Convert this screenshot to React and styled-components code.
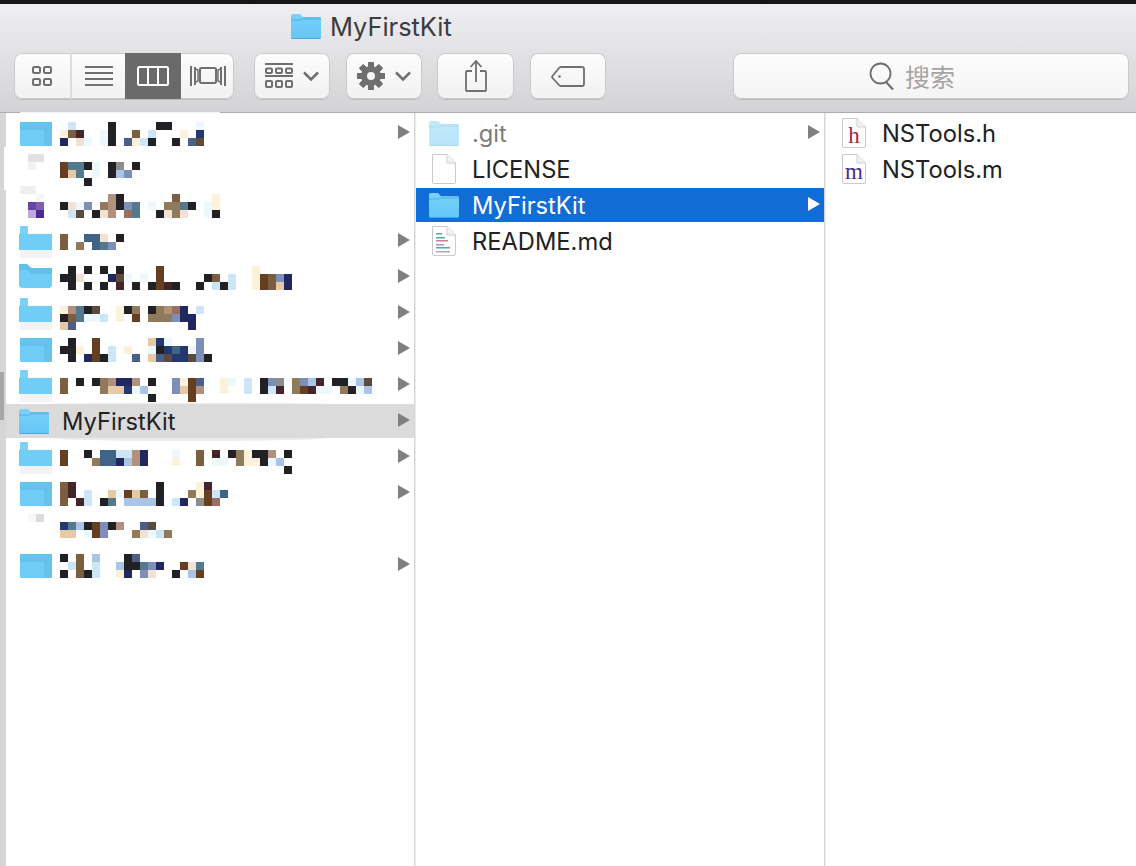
import React from 'react'
import styled, { createGlobalStyle } from 'styled-components';

const PALETTE = {
  k: '#222226', n: '#20285f', N: '#23386e', b: '#7b5d40', r: '#653f22', m: '#45242a',
  s: '#4d5f85', t: '#55798c', d: '#3f6488', l: '#cde6f5', f: '#edf8fd', c: '#fcf1da',
  p: '#e6c9a6', P: '#f2e2d3', o: '#8f7b5c', u: '#7d8fb9', a: '#b2917c', w: '#9a6f5f',
  i: '#a9c4e4', g: '#8a8f8c', h: '#5a4a40', e: '#5d4a38',
};

const LEFT_ROWS = [
  { icon: 'block', top: 6, arrow: true, cells: [
    '.l....k.....kk...f',
    'cbm..fk..b.l...c.N',
    'n.Pf.fk.sclk..k.se',
  ] },
  { icon: 'blank', top: 10, cells: [
    'rttkf.kg.k',
    'rpt.f.kiu',
    '...k',
  ] },
  { icon: 'purple', top: 6, cells: [
    '......ak......b....c',
    'kPfu.oakut.f.ootk.fc',
    '.lh.kPa.wt..kPoP..fk',
  ] },
  { icon: 'tab', top: 10, arrow: true, cells: [
    'b..ddP.k',
    'b.o.dtu',
  ] },
  { icon: 'folder', top: 6, arrow: true, cells: [
    '.k.k.k.k....r...........c',
    'kkP...nef.f.r.....kb.l..crbun',
    '.k.k.k.m.k.krmk..k.lkl..crbpn',
  ] },
  { icon: 'tab', top: 10, arrow: true, cells: [
    'catkh..cko.koawn.l',
    'kbtffl.c.r.ooounn',
    'ps..............n',
  ] },
  { icon: 'block', top: 6, arrow: true, cells: [
    '.k..r......pNf...u',
    'kkc.r.l.c..fkNdNfu',
    '.k.nrkl..s.pshNNhuk',
  ] },
  { icon: 'tab', top: 10, arrow: true, cells: [
    'b.k.koanna.k..ucrs..cf.l.kug.ouim.kkfih',
    'b....oppNfi...upra..c..l.klm.ormff.okfi',
    '...........k....r',
  ] },
  { selected: true, label: 'MyFirstKit', arrow: true },
  { icon: 'tab', top: 10, arrow: true, cells: [
    'r..k.ddllan...f..b.m.kockka.k',
    'r...oddnian...c..b.ff.occkfi',
    '............................k',
  ] },
  { icon: 'block', top: 6, arrow: true, cells: [
    'bm..........k....cm',
    'bm.l..pfrpb.k...ocrld',
    'b.ml.kt.iiiik.ln.grw',
  ] },
  { icon: 'faint', top: 10, cells: [
    'Ntikruka..sh',
    'pp.fru...oPflo',
  ] },
  { icon: 'block', top: 6, arrow: true, cells: [
    'k.b.i...ks',
    '.lb.l..ikktun..rPt',
    'k.bkl..cn.uP..k.ir',
  ] },
];

export default function App() {
  return <Window>
    <GlobalStyle/>
    <BlackBar/>
    <Toolbar>
      <TitleRow>
        <Folder/>
        <Title>MyFirstKit</Title>
      </TitleRow>
      <ToolRow>
        <Segments>
          <Segment $w={58} $divided><GridIcon/></Segment>
          <Segment $w={53}><ListIcon/></Segment>
          <Segment $w={56} $active><ColumnIcon/></Segment>
          <Segment $w={53}><CoverIcon/></Segment>
        </Segments>
        <ToolButton $w={76} $ml={20}><ArrangeIcon/><Chevron/></ToolButton>
        <ToolButton $w={76} $ml={16}><GearIcon/><Chevron/></ToolButton>
        <ToolButton $w={77} $ml={15}><ShareIcon/></ToolButton>
        <ToolButton $w={76} $ml={16}><TagIcon/></ToolButton>
        <SearchBox>
          <SearchIcon/>
          <SearchText>搜索</SearchText>
        </SearchBox>
      </ToolRow>
    </Toolbar>
    <Body>
      <Gutter><GutterPatch/><Thumb/></Gutter>
      <Column $w={408}>
        {LEFT_ROWS.map((row, i) => <LeftRow key={i} row={row}/>)}
      </Column>
      <Divider/>
      <Column $w={408}>
        <Row $pl={13}>
          <Folder faded/>
          <RowText $ml={13} $faded>.git</RowText>
          <Arrow/>
        </Row>
        <Row $pl={15}>
          <Doc/>
          <RowText $ml={15}>LICENSE</RowText>
        </Row>
        <Row $pl={13} $blue>
          <Folder/>
          <RowText $ml={13} $white>MyFirstKit</RowText>
          <Arrow $white/>
        </Row>
        <Row $pl={15}>
          <Doc lines/>
          <RowText $ml={15}>README.md</RowText>
        </Row>
      </Column>
      <Divider/>
      <LastColumn>
        <Row $pl={15}>
          <Doc letter="h" color="#a3243f"/>
          <RowText $ml={15}>NSTools.h</RowText>
        </Row>
        <Row $pl={15}>
          <Doc letter="m" color="#4b2a8c"/>
          <RowText $ml={15}>NSTools.m</RowText>
        </Row>
      </LastColumn>
    </Body>
  </Window>
};

function LeftRow({row}) {
  if (row.selected) {
    return <GreyRow $pl={13}>
      <Folder/>
      <RowText $ml={13}>{row.label}</RowText>
      <Arrow/>
    </GreyRow>;
  }
  return <Row $pl={13}>
    <BlurIcon kind={row.icon}/>
    <Mosaic cells={row.cells} top={row.top}/>
    {row.arrow && <Arrow/>}
  </Row>;
}

// the pixelated file names of the reference
function Mosaic({cells, top}) {
  const rects = [];
  cells.forEach((line, y) => {
    [...line].forEach((ch, x) => {
      if (PALETTE[ch]) rects.push(<rect key={x + '-' + y} x={x * 8} y={y * 8} width="8" height="8" fill={PALETTE[ch]}/>);
    });
  });
  return <MosaicSvg $top={top} width="320" height={cells.length * 8}>{rects}</MosaicSvg>;
}

// the pixelated icons of the left column, drawn on the 36px row
function BlurIcon({kind}) {
  return <BlurSvg width="36" height="34" viewBox="0 0 36 34">
    {kind === 'block' && <>
      <rect x="1" y="6" width="32" height="24" fill="#6fcdf6"/>
      <rect x="1" y="6" width="32" height="8" fill="#63c3ec"/>
      <rect x="25" y="14" width="8" height="16" fill="#68c2e8"/>
    </>}
    {kind === 'tab' && <>
      <rect x="1" y="2" width="8" height="8" fill="#7dd0f6"/>
      <rect x="0" y="10" width="33" height="16" fill="#6fcdf6"/>
      <rect x="1" y="26" width="32" height="8" fill="#f3f3f3"/>
    </>}
    {kind === 'folder' && <>
      <path d="M0 4h8l4 4h21v18l-2 2H2l-2-2z" fill="#6fcdf6"/>
      <path d="M0 4h8l4 4h21v6H12L8 10H0z" fill="#60c1ea"/>
    </>}
    {kind === 'blank' && <>
      <rect x="9" y="2" width="16" height="8" fill="#e2e2e2"/>
      <rect x="9" y="10" width="8" height="8" fill="#f2f2f2"/>
    </>}
    {kind === 'purple' && <>
      <rect x="1" y="-2" width="16" height="8" fill="#efefef"/>
      <rect x="17" y="6" width="8" height="8" fill="#f5f5f5"/>
      <rect x="9" y="14" width="8" height="8" fill="#6a45a8"/>
      <rect x="17" y="14" width="8" height="8" fill="#7f5fb2"/>
      <rect x="9" y="22" width="8" height="8" fill="#bcaad8"/>
      <rect x="17" y="22" width="8" height="8" fill="#4b2a8c"/>
    </>}
    {kind === 'faint' && <>
      <rect x="17" y="2" width="8" height="8" fill="#dcdcdc"/>
      <rect x="9" y="2" width="8" height="8" fill="#f8f8f8"/>
    </>}
  </BlurSvg>;
}

function Folder({faded}) {
  const id = faded ? 'fold-faded' : 'fold';
  return <FolderSvg $faded={faded} width="30" height="25" viewBox="0 0 30 25">
    <defs>
      <linearGradient id={id} x1="0" y1="0" x2="0" y2="1">
        <stop offset="0" stopColor="#78d2fb"/>
        <stop offset="1" stopColor="#64c5f5"/>
      </linearGradient>
    </defs>
    <path d="M0 2A2 2 0 0 1 2 0H9l3 3h16a2 2 0 0 1 2 2v18a2 2 0 0 1-2 2H2a2 2 0 0 1-2-2z" fill={`url(#${id})`}/>
    <path d="M0 5h10l2-2h16a2 2 0 0 1 2 2v1H12l-2 1H0z" fill="#62bfea"/>
    <path d="M0 24h30a2 2 0 0 1-2 1H2a2 2 0 0 1-2-1z" fill="#4aa5d8"/>
  </FolderSvg>;
}

function Doc({lines, letter, color}) {
  return <svg width="26" height="32" viewBox="0 0 26 32">
    <path d="M1.500 1.500H16L24.500 10V29a1.500 1.500 0 0 1-1.500 1.500H3A1.500 1.500 0 0 1 1.500 29z" fill="#fff" stroke="#c9c9c9" strokeWidth="1"/>
    <path d="M16 1.500V10h8.500" fill="#f2f2f2" stroke="#d0d0d0" strokeWidth="1"/>
    {lines && <>
      <rect x="5" y="8" width="6" height="1.500" fill="#54a7a8"/>
      <rect x="5" y="12" width="9" height="1.500" fill="#54a7a8"/>
      <rect x="5" y="15" width="12" height="1.500" fill="#cf7e97"/>
      <rect x="5" y="19" width="8" height="1.500" fill="#a68bdc"/>
      <rect x="5" y="22" width="14" height="1.500" fill="#4fabb0"/>
      <rect x="5" y="26" width="14" height="1.500" fill="#a9a9a9"/>
    </>}
    {letter && <text x="13" y="26" textAnchor="middle" fontFamily="'Liberation Serif', serif" fontSize="23" fill={color}>{letter}</text>}
  </svg>;
}

const ICON_GREY = '#6f6f6f';

function GridIcon() {
  return <svg width="20" height="20" viewBox="0 0 20 20" fill="none" stroke={ICON_GREY} strokeWidth="2">
    <rect x="1" y="1" width="7" height="6" rx="1.500"/>
    <rect x="12" y="1" width="7" height="6" rx="1.500"/>
    <rect x="1" y="13" width="7" height="6" rx="1.500"/>
    <rect x="12" y="13" width="7" height="6" rx="1.500"/>
  </svg>;
}

function ListIcon() {
  return <svg width="28" height="20" viewBox="0 0 28 20" fill={ICON_GREY}>
    <rect y="0" width="28" height="2"/>
    <rect y="6" width="28" height="2"/>
    <rect y="12" width="28" height="2"/>
    <rect y="18" width="28" height="2"/>
  </svg>;
}

function ColumnIcon() {
  return <svg width="32" height="20" viewBox="0 0 32 20" fill="none" stroke="#fff" strokeWidth="2">
    <rect x="1" y="1" width="30" height="18" rx="1.500"/>
    <path d="M11 1v18M21 1v18"/>
  </svg>;
}

function CoverIcon() {
  return <svg width="36" height="22" viewBox="0 0 36 22" fill="none" stroke={ICON_GREY} strokeWidth="2">
    <rect x="10" y="3" width="16" height="15" rx="1.500"/>
    <path d="M1 1v20M5 2v18M35 1v20M31 2v18"/>
    <path d="M6 4l2 1v11l-2 1M30 4l-2 1v11l2 1" strokeWidth="1.500"/>
  </svg>;
}

function ArrangeIcon() {
  return <svg width="28" height="26" viewBox="0 0 28 26" fill="none" stroke={ICON_GREY} strokeWidth="2">
    <path d="M0 1h28M0 13h28"/>
    <rect x="1" y="5.500" width="6" height="4.500" rx="1"/>
    <rect x="11" y="5.500" width="6" height="4.500" rx="1"/>
    <rect x="21" y="5.500" width="6" height="4.500" rx="1"/>
    <rect x="1" y="18" width="6" height="6" rx="1"/>
    <rect x="11" y="18" width="6" height="6" rx="1"/>
    <rect x="21" y="18" width="6" height="6" rx="1"/>
  </svg>;
}

function Chevron() {
  return <ChevronSvg width="16" height="10" viewBox="0 0 16 10" fill="none" stroke={ICON_GREY} strokeWidth="2.500">
    <path d="M1 1.500l7 7 7-7"/>
  </ChevronSvg>;
}

function GearIcon() {
  const teeth = [0, 45, 90, 135, 180, 225, 270, 315];
  return <svg width="28" height="28" viewBox="0 0 28 28">
    {teeth.map(a => <rect key={a} x="11" y="0" width="6" height="28" rx="1" fill={ICON_GREY} transform={`rotate(${a} 14 14)`}/>)}
    <circle cx="14" cy="14" r="10" fill={ICON_GREY}/>
    <circle cx="14" cy="14" r="4" fill="#f6f6f6"/>
  </svg>;
}

function ShareIcon() {
  return <svg width="22" height="32" viewBox="0 0 22 32" fill="none" stroke={ICON_GREY} strokeWidth="1.800">
    <path d="M7 11H2a1 1 0 0 0-1 1v18a1 1 0 0 0 1 1h18a1 1 0 0 0 1-1V12a1 1 0 0 0-1-1h-5"/>
    <path d="M11 22V1M5.500 7L11 1l5.500 6"/>
  </svg>;
}

function TagIcon() {
  return <svg width="34" height="21" viewBox="0 0 34 21" fill="none" stroke={ICON_GREY} strokeWidth="1.800">
    <path d="M10 1h21a2 2 0 0 1 2 2v15a2 2 0 0 1-2 2H10a3 3 0 0 1-2-1l-6.500-7a1.500 1.500 0 0 1 0-2L8 2a3 3 0 0 1 2-1z"/>
    <circle cx="8.500" cy="10.500" r="1.300" fill={ICON_GREY} stroke="none"/>
  </svg>;
}

function SearchIcon() {
  return <svg width="26" height="28" viewBox="0 0 26 28" fill="none" stroke={ICON_GREY} strokeWidth="1.800">
    <circle cx="11.500" cy="11.500" r="10"/>
    <path d="M17 20l7 7.500" strokeWidth="2.200"/>
  </svg>;
}

const GlobalStyle = createGlobalStyle`
  html, body {
    margin: 0;
    padding: 0;
    background: #fff;
  }
  body {
    font-family: Inter, "Liberation Sans", sans-serif;
  }
`;

const Window = styled.div`
  display: flex;
  flex-direction: column;
  width: 1136px;
  height: 866px;
  overflow: hidden;
`;

const BlackBar = styled.div`
  height: 4px;
  background: #161616;
`;

const Toolbar = styled.div`
  position: relative;
  height: 109px;
  box-sizing: border-box;
  background: linear-gradient(#efeef0, #d3d2d4);
  border-bottom: 1px solid #ababab;

  &::after {
    content: '';
    position: absolute;
    left: 20px;
    bottom: -1px;
    width: 200px;
    height: 1px;
    background: #f4f4f4;
  }
`;

const TitleRow = styled.div`
  display: flex;
  align-items: center;
  height: 49px;
  padding: 0 0 4px 291px;
  box-sizing: border-box;
`;

const Title = styled.div`
  margin-left: 9px;
  font-size: 25.400px;
  color: #3c3b3f;
`;

const ToolRow = styled.div`
  display: flex;
  align-items: stretch;
  height: 46px;
  padding-left: 14px;
`;

const Segments = styled.div`
  display: flex;
  width: 220px;
  border-radius: 8px;
  overflow: hidden;
  background: linear-gradient(#fdfdfd, #f1f1f1);
  box-shadow: inset 0 0 0 1px #c9c8ca, 0 1px 0 #bdbcbe;
`;

const Segment = styled.div`
  display: flex;
  align-items: center;
  justify-content: center;
  width: ${p => p.$w}px;
  box-sizing: border-box;
  background: ${p => p.$active ? '#6a6a6a' : 'transparent'};
  border-right: ${p => p.$divided ? '2px solid #dcdbdd' : 'none'};
`;

const ToolButton = styled.div`
  display: flex;
  align-items: center;
  justify-content: center;
  width: ${p => p.$w}px;
  margin-left: ${p => p.$ml}px;
  border-radius: 8px;
  background: linear-gradient(#fdfdfd, #f1f1f1);
  box-shadow: inset 0 0 0 1px #c9c8ca, 0 1px 0 #bdbcbe;
`;

const ChevronSvg = styled.svg`
  margin-left: 10px;
`;

const SearchBox = styled.div`
  display: flex;
  align-items: center;
  justify-content: center;
  width: 396px;
  margin-left: 127px;
  padding-right: 38px;
  box-sizing: border-box;
  border-radius: 8px;
  background: linear-gradient(#fdfdfd, #f4f4f4);
  box-shadow: inset 0 0 0 1px #c9c8ca, 0 1px 0 #bdbcbe;
`;

const SearchText = styled.span`
  margin-left: 10px;
  font-family: "Noto Sans CJK SC", sans-serif;
  font-size: 25px;
  color: #a6a4a4;
`;

const Body = styled.div`
  display: flex;
  flex: 1;
  min-height: 0;
  background: #fff;
`;

const Gutter = styled.div`
  width: 6px;
  flex: none;
  background: #d6d6d6;
  padding-top: 34px;
  box-sizing: border-box;
`;

const GutterPatch = styled.div`
  width: 2px;
  height: 43px;
  margin-left: 4px;
  background: #fff;
`;

const Thumb = styled.div`
  width: 4px;
  height: 48px;
  margin-top: 182px;
  background: #a8a6a6;
`;

const Column = styled.div`
  width: ${p => p.$w}px;
  padding-top: 3px;
  box-sizing: border-box;
`;

const LastColumn = styled(Column)`
  flex: 1;
`;

const Divider = styled.div`
  width: 2px;
  box-sizing: border-box;
  border-left: 1px solid #d5d5d5;
  background: #ececec;
`;

const Row = styled.div`
  position: relative;
  display: flex;
  align-items: center;
  height: 34px;
  margin-bottom: 2px;
  padding-left: ${p => p.$pl}px;
  background: ${p => p.$blue ? '#116cd6' : 'transparent'};
`;

const GreyRow = styled(Row)`
  background: #dbdbdb;

  &::before, &::after {
    content: '';
    position: absolute;
    left: 45px;
    width: 275px;
    background: #ececec;
  }
  &::before {
    top: -1px;
    height: 1px;
    border-radius: 50% 50% 0 0 / 100% 100% 0 0;
  }
  &::after {
    top: 34px;
    height: 3px;
    border-radius: 0 0 50% 50% / 0 0 100% 100%;
  }
`;

const RowText = styled.span`
  margin-left: ${p => p.$ml}px;
  font-size: 23.700px;
  color: ${p => p.$white ? '#fff' : p.$faded ? '#7c7c7c' : '#222'};
`;

const Arrow = styled.span`
  position: absolute;
  right: 4px;
  top: 9px;
  border-left: 12px solid ${p => p.$white ? '#fff' : '#808080'};
  border-top: 7px solid transparent;
  border-bottom: 7px solid transparent;
`;

const FolderSvg = styled.svg`
  flex: none;
  opacity: ${p => p.$faded ? 0.45 : 1};
`;

const BlurSvg = styled.svg`
  flex: none;
  overflow: visible;
  align-self: flex-start;
`;

const MosaicSvg = styled.svg`
  align-self: flex-start;
  margin-top: ${p => p.$top}px;
  margin-left: 5px;
  flex: none;
`;
